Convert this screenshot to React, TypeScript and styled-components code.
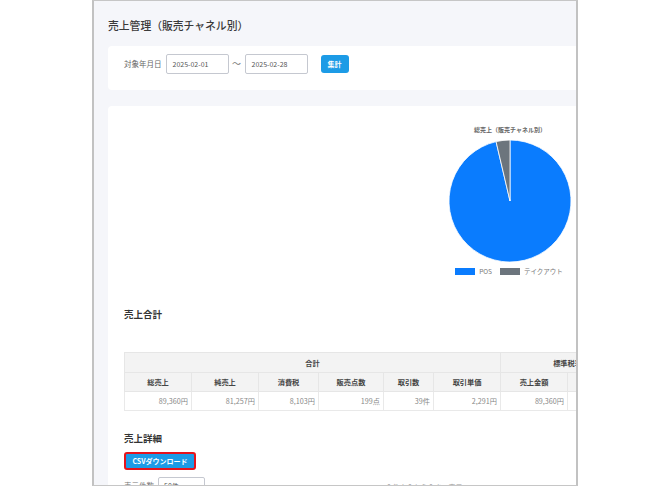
import React from "react";
import styled, { createGlobalStyle } from "styled-components";

const Global = createGlobalStyle`
  html, body { margin: 0; padding: 0; background: #ffffff; }
  body { font-family: "Noto Sans CJK JP", "Noto Sans", sans-serif; color: #333; }
  * { box-sizing: border-box; }
`;

const Frame = styled.div`
  margin-left: 92px;
  width: 486px;
  height: 486px;
  border-top: 1px solid #c6c6c6;
  border-bottom: 1px solid #c6c6c6;
  border-left: 2px solid #c2c2c2;
  border-right: 2px solid #c2c2c2;
  overflow: hidden;
  background: #f5f6fa;
`;

const Page = styled.div`
  width: 720px;
  padding: 16px 0 0 14px;
`;

const Title = styled.h1`
  margin: 0 0 13px;
  font-size: 10.8px;
  line-height: 16px;
  font-weight: 500;
  color: #3a3a3a;
`;

const FilterCard = styled.div`
  height: 44px;
  background: #fff;
  border-radius: 4px;
  display: flex;
  align-items: flex-start;
  padding: 8px 16px 0;
`;

const FilterLabel = styled.span`
  font-size: 7.5px;
  line-height: 20px;
  color: #666;
  margin-right: 4px;
`;

const DateInput = styled.div`
  width: 63px;
  height: 20px;
  border: 1px solid #c5c8d0;
  border-radius: 2px;
  font-size: 7px;
  line-height: 18px;
  padding-left: 6px;
  color: #555;
`;

const Tilde = styled.span`
  width: 16px;
  text-align: center;
  font-size: 9px;
  line-height: 20px;
  color: #777;
`;

const PrimaryButton = styled.button<{ $outlined?: boolean }>`
  font-family: inherit;
  background: #1c9be6;
  color: #fff;
  font-weight: 700;
  font-size: 7px;
  border-radius: 3px;
  cursor: pointer;
  height: 18px;
  padding: 0 7px;
  border: ${(p) => (p.$outlined ? "2px solid #e5141c" : "none")};
`;

const SearchButton = styled(PrimaryButton)`
  margin-left: 13px;
  margin-top: 1px;
  width: 28px;
  padding: 0;
`;

const MainCard = styled.div`
  margin-top: 16px;
  background: #fff;
  border-radius: 4px 4px 0 0;
  padding: 19px 16px 0;
  height: 500px;
`;

const ChartBlock = styled.div`
  margin-left: 316px;
  width: 140px;
  display: flex;
  flex-direction: column;
  align-items: center;
`;

const ChartTitle = styled.div`
  font-size: 6px;
  line-height: 10px;
  font-weight: 700;
  color: #666;
`;

const PieSvg = styled.svg`
  margin-top: 5px;
  display: block;
`;

const Legend = styled.div`
  margin-top: 5px;
  display: flex;
  align-items: center;
  gap: 4px;
  height: 8px;
  margin-left: 2px;
`;

const Swatch = styled.span<{ $color: string }>`
  width: 20px;
  height: 7px;
  background: ${(p) => p.$color};
`;

const LegendText = styled.span`
  font-size: 6.5px;
  color: #777;
  margin-right: 4px;
`;

const SectionHeading = styled.h2<{ $top: number }>`
  margin: ${(p) => p.$top}px 0 0;
  font-size: 9.5px;
  line-height: 14px;
  font-weight: 700;
  color: #333;
`;

const Table = styled.table`
  margin-top: 31px;
  border-collapse: collapse;
  table-layout: fixed;
  width: 577px;
  font-size: 7.2px;
`;

const GroupTh = styled.th`
  height: 20px;
  background: #f3f3f3;
  border: 1px solid #e6e6e6;
  font-weight: 700;
  color: #444;
  text-align: center;
  padding: 0;
`;

const ColTh = styled.th`
  height: 19px;
  background: #f3f3f3;
  border: 1px solid #e6e6e6;
  font-weight: 700;
  color: #444;
  text-align: center;
  padding: 0;
`;

const Td = styled.td`
  height: 19px;
  border: 1px solid #e9e9e9;
  color: #888;
  text-align: right;
  padding: 0 3px 0 0;
`;

const CsvButton = styled(PrimaryButton)`
  margin-top: 7px;
  width: 72px;
  padding: 0;
`;

const ControlRow = styled.div`
  margin-top: 7px;
  display: flex;
  align-items: flex-start;
`;

const ControlLabel = styled.span`
  font-size: 7.5px;
  line-height: 16px;
  color: #777;
  margin-right: 4px;
  margin-top: 1px;
`;

const Select = styled.div`
  width: 47px;
  height: 18px;
  border: 1px solid #c5c8d0;
  border-radius: 2px;
  display: flex;
  align-items: center;
  justify-content: space-between;
  padding: 0 5px;
  font-size: 7px;
  color: #555;
`;

const PageInfo = styled.span`
  margin-left: 182px;
  margin-top: 5px;
  font-size: 7px;
  color: #999;
`;

const cols = [67, 67, 60, 65, 50, 67, 67, 67, 67];
const headers = ["総売上", "純売上", "消費税", "販売点数", "取引数", "取引単価", "売上金額", "消費税", "売上金額"];
const values = ["89,360円", "81,257円", "8,103円", "199点", "39件", "2,291円", "89,360円", "8,103円", "0円"];

function Pie() {
  const r = 61;
  const a = (13.2 * Math.PI) / 180;
  const x = r - r * Math.sin(a);
  const y = r - r * Math.cos(a);
  return (
    <PieSvg width={122} height={122} viewBox="0 0 122 122">
      <path d={`M${r} ${r} L${r} 0 A${r} ${r} 0 1 1 ${x} ${y} Z`} fill="#0a7cfe" stroke="#fff" strokeWidth={0.8} />
      <path d={`M${r} ${r} L${x} ${y} A${r} ${r} 0 0 1 ${r} 0 Z`} fill="#6c757d" stroke="#fff" strokeWidth={0.8} />
    </PieSvg>
  );
}

export default function App() {
  return (
    <>
      <Global />
      <Frame>
        <Page>
          <Title>売上管理（販売チャネル別）</Title>
          <FilterCard>
            <FilterLabel>対象年月日</FilterLabel>
            <DateInput>2025-02-01</DateInput>
            <Tilde>〜</Tilde>
            <DateInput>2025-02-28</DateInput>
            <SearchButton>集計</SearchButton>
          </FilterCard>
          <MainCard>
            <ChartBlock>
              <ChartTitle>総売上（販売チャネル別）</ChartTitle>
              <Pie />
              <Legend>
                <Swatch $color="#0a7cfe" />
                <LegendText>POS</LegendText>
                <Swatch $color="#6c757d" />
                <LegendText>テイクアウト</LegendText>
              </Legend>
            </ChartBlock>
            <SectionHeading $top={32}>売上合計</SectionHeading>
            <Table>
              <colgroup>
                {cols.map((w, i) => (
                  <col key={i} style={{ width: w }} />
                ))}
              </colgroup>
              <thead>
                <tr>
                  <GroupTh colSpan={6}>合計</GroupTh>
                  <GroupTh colSpan={2}>標準税率</GroupTh>
                  <GroupTh>軽減税率</GroupTh>
                </tr>
                <tr>
                  {headers.map((h, i) => (
                    <ColTh key={i}>{h}</ColTh>
                  ))}
                </tr>
              </thead>
              <tbody>
                <tr>
                  {values.map((v, i) => (
                    <Td key={i}>{v}</Td>
                  ))}
                </tr>
              </tbody>
            </Table>
            <SectionHeading $top={20}>売上詳細</SectionHeading>
            <CsvButton $outlined>CSVダウンロード</CsvButton>
            <ControlRow>
              <ControlLabel>表示件数</ControlLabel>
              <Select>
                <span>50件</span>
                <span>⌄</span>
              </Select>
              <PageInfo>0 件中 0 から 0 まで表示</PageInfo>
            </ControlRow>
          </MainCard>
        </Page>
      </Frame>
    </>
  );
}
